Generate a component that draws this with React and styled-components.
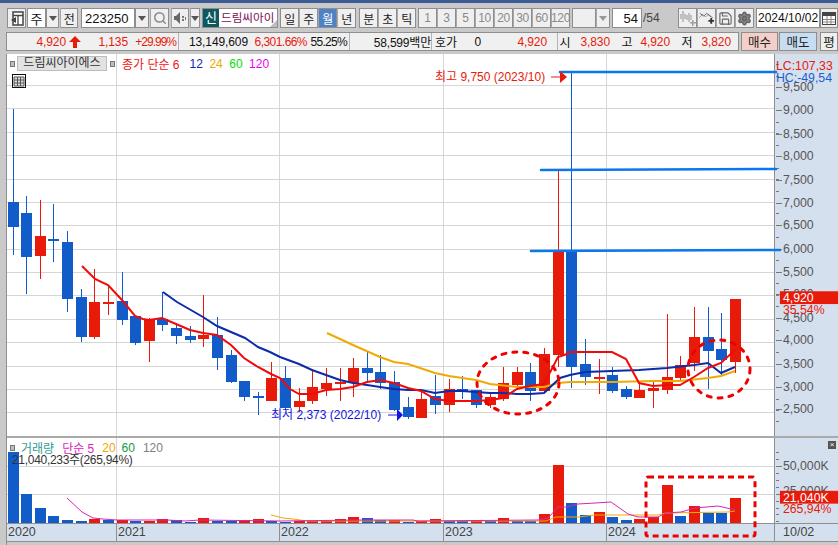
import styled, { createGlobalStyle } from "styled-components";
import { Search, Save, Settings } from "lucide-react";

const GlobalStyle = createGlobalStyle`
  html, body { margin: 0; padding: 0; }
  body { background: #c9c9c9; font-family: "Liberation Sans", "Noto Sans CJK KR", sans-serif; }
`;

const RED = "#e81a0a";
const BLUE = "#125cc9";

// [색, 꼬리위, 몸통위, 몸통아래, 꼬리아래]
const candles = [
  ["b", 109, 202, 227, 255], ["b", 196, 213, 257, 294], ["r", 200, 236, 256, 279], ["b", 204, 239, 241, 262],
  ["b", 231, 242, 299, 312], ["b", 289, 297, 337, 342], ["r", 269, 302, 337, 339], ["r", 285, 302, 304, 315],
  ["b", 272, 301, 320, 325], ["b", 316, 316, 343, 345], ["r", 318, 320, 341, 362], ["b", 292, 319, 325, 331],
  ["b", 324, 328, 336, 344], ["b", 326, 336, 340, 343], ["r", 295, 335, 339, 347], ["b", 317, 335, 358, 370],
  ["b", 350, 355, 382, 383], ["b", 381, 381, 397, 401], ["b", 392, 396, 398, 415], ["r", 362, 378, 401, 401],
  ["b", 366, 378, 408, 410], ["r", 388, 401, 407, 412], ["r", 369, 387, 401, 404], ["r", 368, 383, 389, 396],
  ["r", 368, 382, 384, 401], ["r", 358, 368, 383, 397], ["b", 351, 368, 373, 383], ["b", 355, 372, 383, 389],
  ["b", 371, 382, 410, 411], ["b", 397, 407, 417, 419], ["r", 392, 399, 418, 418], ["b", 375, 396, 405, 414],
  ["r", 379, 389, 405, 412], ["b", 376, 389, 391, 399], ["b", 390, 390, 405, 408], ["r", 394, 397, 405, 408],
  ["r", 367, 383, 399, 401], ["r", 367, 372, 385, 390], ["b", 363, 372, 391, 401], ["r", 348, 354, 391, 392],
  ["r", 171, 252, 355, 367], ["b", 72, 250, 367, 388], ["b", 339, 364, 377, 385], ["r", 359, 377, 379, 394],
  ["b", 367, 375, 391, 393], ["b", 386, 389, 397, 399], ["r", 382, 390, 398, 398], ["r", 381, 388, 391, 408],
  ["r", 314, 377, 390, 394], ["r", 356, 365, 378, 381], ["r", 307, 337, 363, 371], ["b", 307, 337, 351, 389],
  ["b", 313, 349, 360, 376], ["r", 299, 299, 362, 373],
];

const volumes = [
  ["b", 452], ["b", 494], ["b", 508], ["b", 516], ["b", 520], ["b", 521], ["r", 519], ["b", 520],
  ["r", 520], ["b", 521], ["r", 521], ["r", 519], ["b", 520], ["b", 522], ["r", 518], ["b", 521],
  ["b", 521], ["r", 520], ["r", 519], ["b", 521], ["b", 522], ["r", 521], ["r", 521], ["r", 521],
  ["r", 519], ["r", 517], ["b", 518], ["b", 520], ["r", 520], ["b", 522], ["r", 521], ["r", 519],
  ["b", 521], ["b", 521], ["r", 520], ["b", 521], ["r", 518], ["b", 521], ["b", 521], ["r", 514],
  ["r", 465], ["b", 503], ["b", 515], ["r", 512], ["b", 517], ["b", 520], ["r", 519], ["r", 517],
  ["r", 485], ["b", 516], ["r", 506], ["b", 513], ["b", 513], ["r", 498],
];

const candleXs = [
  13, 26, 40, 53, 67, 81, 94, 108, 122, 135, 149, 162, 176, 190, 203, 217, 231, 244, 258, 271, 285, 299, 312, 326, 340, 353, 367,
  380, 394, 408, 421, 435, 449, 462, 476, 490, 503, 517, 530, 544, 558, 571, 585, 599, 612, 626, 639, 653, 667, 680, 694, 708, 721, 735,
];

const ma6 = "82,266 95,279 108,285 122,300 135,316 143,319 149,320 162,318 176,324 190,330 203,333 217,335 231,345 244,358 258,367 271,374 280,378 290,389 299,394 312,394 326,390 340,389 353,387 367,382 380,380 394,383 408,388 421,391 435,399 449,401 462,401 476,401 490,400 503,398 517,389 530,386 544,384 558,357 567,354 570,352 585,352 612,352 626,359 639,383 653,386 667,385 680,385 694,377 708,368 721,363 735,350";
const ma12 = "163,292 177,302 203,317 217,326 245,338 258,347 270,352 280,357 299,364 312,370 326,375 340,380 353,383 367,385 380,387 394,389 408,390 421,390 435,393 449,391 462,391 476,392 490,393 503,393 517,394 530,394 544,393 560,378 570,375 585,372 612,371 639,370 667,368 694,365 708,363 721,373 735,367";
const ma24 = "327,333 353,345 380,357 394,362 408,364 435,373 449,376 476,380 490,384 517,387 544,387 558,383 570,382 612,382 653,381 680,381 708,378 721,376 735,371";
const volMa5 = "67,498 82,512 93,518 103,519 117,520 167,520 185,521 200,520 280,521 362,520 413,520 418,521 538,520 548,518 558,507 566,507 578,504 595,503 611,502 621,509 628,514 638,517 658,517 666,513 681,512 695,508 718,506 735,510";
const volMa20 = "271,515 283,518 293,519 307,521 418,521 546,521 556,517 578,517 595,515 645,515 658,515 666,513 728,512 735,511";

const priceLabels = [
  ["9,500", 85], ["9,000", 108], ["8,500", 132], ["8,000", 155], ["7,500", 179], ["7,000", 202], ["6,500", 225],
  ["6,000", 249], ["5,500", 272], ["5,000", 295], ["4,500", 319], ["4,000", 342], ["3,500", 366], ["3,000", 389], ["2,500", 412],
];
const gridYs = [85, 108, 132, 155, 179, 202, 225, 249, 272, 295, 319, 342, 366, 389, 412];
const gridXs = [116, 279, 443, 606];

const Page = styled.div`
  width: 838px;
  height: 545px;
  overflow: hidden;
  display: flex;
  flex-direction: column;
  background: #c9c9c9;
  color: #222;
  font-size: 12px;
  font-family: "Liberation Sans", "Noto Sans CJK KR", sans-serif;
`;
const TopBand = styled.div`
  height: 3px;
  background: #3d5b94;
  flex: none;
`;
const Toolbar = styled.div`
  height: 20px;
  margin-top: 5px;
  padding-left: 7px;
  display: flex;
  flex: none;
`;
const Group = styled.div`
  display: flex;
  margin-left: ${(p) => p.$gap || 0}px;
`;
const ToolBtn = styled.div`
  width: ${(p) => p.$w || 19}px;
  height: 20px;
  box-sizing: border-box;
  flex: none;
  display: flex;
  align-items: center;
  justify-content: center;
  border: 1px solid #8e8e8e;
  background: ${(p) => (p.$active ? "#4f82c4" : "#efefef")};
  color: ${(p) => (p.$active ? "#fff" : p.$dim ? "#8a8a8a" : "#222")};
  margin-left: ${(p) => p.$gap || 0}px;
  font-size: 12px;
  letter-spacing: -0.4px;
  & + & { border-left-color: #a8a8a8; }
`;
const Field = styled.div`
  width: ${(p) => p.$w}px;
  height: 20px;
  box-sizing: border-box;
  flex: none;
  display: flex;
  align-items: center;
  justify-content: ${(p) => p.$align || "flex-start"};
  padding: 0 ${(p) => p.$pad ?? 3}px;
  border: 1px solid #8e8e8e;
  background: #fff;
  color: #111;
  font-size: ${(p) => p.$size || 13}px;
  margin-left: ${(p) => p.$gap || 0}px;
`;
const Arrow = styled.div`
  width: 0;
  height: 0;
  border-left: 4px solid transparent;
  border-right: 4px solid transparent;
  border-top: 5px solid ${(p) => (p.$dim ? "#999" : "#555")};
`;
const NameBox = styled.div`
  width: 80px;
  height: 20px;
  box-sizing: border-box;
  margin-left: 2px;
  display: flex;
  border: 1px solid #8e8e8e;
  background: #fff;
  position: relative;
  overflow: hidden;
`;
const NameTag = styled.span`
  width: 16px;
  background: #0c5a5f;
  color: #fff;
  text-align: center;
  line-height: 18px;
  font-size: 13px;
  flex: none;
`;
const NameText = styled.span`
  padding-left: 2px;
  color: #7a0b55;
  font-size: 11.6px;
  line-height: 18px;
  white-space: nowrap;
`;
const Corner = styled.i`
  position: absolute;
  right: 0;
  bottom: 0;
  border-left: 7px solid transparent;
  border-bottom: 7px solid #bdbdbd;
`;
const PageCount = styled.span`
  width: 20px;
  margin-left: 1px;
  line-height: 20px;
  color: #444;
  flex: none;
`;

const InfoRow = styled.div`
  height: 19px;
  margin-top: 4px;
  padding-left: 6px;
  display: flex;
  flex: none;
`;
const InfoBar = styled.div`
  width: 733px;
  box-sizing: border-box;
  display: flex;
  border: 1px solid #8e8e8e;
  background: #f0f0f0;
  flex: none;
`;
const InfoCell = styled.div`
  width: ${(p) => p.$w}px;
  box-sizing: border-box;
  display: flex;
  align-items: center;
  border-right: ${(p) => (p.$last ? "none" : "1px solid #b4b4b4")};
  flex: none;
`;
const Num = styled.span`
  color: ${(p) => p.$color || "#111"};
  width: ${(p) => (p.$w ? `${p.$w}px` : "auto")};
  margin-left: ${(p) => p.$gap || 0}px;
  text-align: ${(p) => p.$align || "right"};
  letter-spacing: ${(p) => p.$track ?? -0.1}px;
  white-space: nowrap;
  flex: none;
`;
const UpArrow = styled.svg`
  margin-left: 3px;
  flex: none;
`;
const TradeBtn = styled.div`
  width: ${(p) => p.$w}px;
  box-sizing: border-box;
  margin-left: ${(p) => p.$gap}px;
  display: flex;
  align-items: center;
  justify-content: center;
  border: 1px solid #8e8e8e;
  background: ${(p) => p.$bg};
  font-size: 12.5px;
  color: #222;
  flex: none;
`;

const Board = styled.div`
  margin-top: 3px;
  margin-left: 6px;
  flex: 1;
  display: flex;
  flex-direction: column;
  border-left: 1px solid #8f8f8f;
`;
const PricePanel = styled.div`
  height: 382px;
  display: flex;
  position: relative;
  flex: none;
  background: #fff;
`;
const VolumePanel = styled.div`
  height: 85px;
  display: flex;
  position: relative;
  flex: none;
  background: #fff;
  border-top: 2px solid #a9a9a9;
`;
const Plot = styled.svg`
  width: 767px;
  height: 100%;
  display: block;
  overflow: visible;
  position: relative;
  z-index: 2;
  flex: none;
`;
const Axis = styled.svg`
  width: 64px;
  height: 100%;
  display: block;
  background: #d5e0ee;
  border-left: 1px solid #8f8f8f;
  box-sizing: border-box;
  flex: none;
`;
const AxisLabel = styled.text`
  font-family: "Liberation Sans", sans-serif;
  font-size: 12.5px;
  fill: ${(p) => p.$color || "#555"};
`;
const ChartNote = styled.text`
  font-family: "Liberation Sans", "Noto Sans CJK KR", sans-serif;
  font-size: 12px;
  fill: ${(p) => p.$color};
`;
const LegendRow = styled.div`
  position: absolute;
  top: 2px;
  left: 3px;
  height: 15px;
  display: flex;
  align-items: center;
  z-index: 3;
`;
const VolumeLegend = styled.div`
  position: absolute;
  top: 2px;
  left: 3px;
  z-index: 3;
`;
const Bullet = styled.i`
  width: 5px;
  height: 6px;
  background: #bdbdbd;
  border: 1px solid #777;
  box-sizing: border-box;
  flex: none;
`;
const StockChip = styled.span`
  width: 90px;
  height: 15px;
  margin: 0 3px 0 2px;
  box-sizing: border-box;
  background: #e2e2e2;
  border: 1px solid #bdbdbd;
  text-align: center;
  line-height: 13px;
  font-size: 12px;
  color: #333;
`;
const LegendItem = styled.span`
  color: ${(p) => p.$color};
  margin-left: ${(p) => p.$gap}px;
  font-size: 12px;
  white-space: nowrap;
`;
const GridIcon = styled.svg`
  position: absolute;
  top: 20px;
  left: 5px;
  z-index: 3;
`;
const VolumeHead = styled.div`
  display: flex;
  align-items: center;
  height: 15px;
`;
const VolumeInfo = styled.div`
  margin-left: 2px;
  margin-top: -1px;
  line-height: 12px;
  font-size: 12px;
  color: #333;
  letter-spacing: -0.3px;
`;
const CloseChip = styled.span`
  position: absolute;
  top: 3px;
  right: 2px;
  width: 8px;
  height: 8px;
  background: #555;
  color: #fff;
  font-size: 8px;
  line-height: 8px;
  text-align: center;
  z-index: 3;
`;
const TimeAxis = styled.div`
  height: 19px;
  flex: none;
  display: flex;
  background: #d5e0ee;
  border-top: 1px solid #8f8f8f;
  border-bottom: 1px solid #8f8f8f;
  box-sizing: border-box;
`;
const TimeCell = styled.div`
  width: ${(p) => p.$w}px;
  box-sizing: border-box;
  padding-left: ${(p) => p.$pad || 1}px;
  border-right: ${(p) => (p.$last ? "none" : "1px solid #8f8f8f")};
  color: #444;
  font-size: 12.5px;
  line-height: 17px;
  flex: none;
`;

function ChartLayoutIcon() {
  return (
    <svg width="14" height="15" viewBox="0 0 14 15">
      <rect x="3" y="1" width="10" height="13" fill="#fff" stroke="#444" strokeWidth="1.5" />
      <path d="M3 4.5h10M8 4.5v9.5" stroke="#444" strokeWidth="1.3" />
      <path d="M6 6v6L1 9z" fill="#444" />
    </svg>
  );
}

function SpeakerIcon() {
  return (
    <svg width="14" height="14" viewBox="0 0 14 14">
      <path d="M1 5h2l4-4v12l-4-4H1z" fill="#666" />
      <path d="M9 5h2v2H9zM9 8h2v2H9zM12 6h1v3h-1z" fill="#777" />
    </svg>
  );
}

function CandleIcon() {
  return (
    <svg width="17" height="16" viewBox="0 0 17 16">
      <path d="M3 1h2v3h2v5H5v3H3V9H1V4h2zM9 3h2v2h2v5h-2v2H9v-2H7V5h2z" fill="#c0c0c0" />
      <path d="M13 10h1.5v2H17v1.5h-2.500V16H13v-2.500h-2V12h2z" fill="#a0a0a0" />
    </svg>
  );
}

function LineAddIcon() {
  return (
    <svg width="18" height="16" viewBox="0 0 18 16">
      <path d="M1 8l4-4 3 3 3-3 5 4" fill="none" stroke="#9a9a9a" />
      <path d="M2 3l4 3 3-3 5 4" fill="none" stroke="#666" />
      <path d="M11 10h2V8h2v2h2v2h-2v2h-2v-2h-2z" fill="#333" />
    </svg>
  );
}

function CalendarIcon() {
  return (
    <svg width="14" height="13" viewBox="0 0 14 13">
      <rect x="0.5" y="0.5" width="13" height="12" fill="#fff" stroke="#444" />
      <path d="M1 1h12v3H1z" fill="#444" />
      <path d="M1 7.500h12M1 10h12M5 4v8M9 4v8" stroke="#888" />
    </svg>
  );
}

function Candles() {
  return candles.map(([c, wt, bt, bb, wb], i) => {
    const x = candleXs[i] + 0.5;
    const color = c === "r" ? RED : BLUE;
    return (
      <g key={i} shapeRendering="crispEdges">
        <line x1={x} x2={x} y1={wt} y2={wb} stroke={color} />
        <rect x={x - 5.5} y={bt} width={11} height={bb - bt} fill={color} />
      </g>
    );
  });
}

function GridLines({ ys, top, bottom }) {
  return (
    <g stroke="#d6d6d6" shapeRendering="crispEdges">
      {ys.map((y) => <line key={y} x1="7" x2="774" y1={y + 0.5} y2={y + 0.5} />)}
      {gridXs.map((x) => <line key={x} x1={x + 0.5} x2={x + 0.5} y1={top} y2={bottom} />)}
    </g>
  );
}

function PriceAxis() {
  const minor = [];
  for (let y = 61; y < 436; y += 23.45 / 2) minor.push(Math.round(y));
  return (
    <Axis viewBox="774 54 64 382">
      <g stroke="#777" shapeRendering="crispEdges">
        {minor.map((y) => <line key={y} x1="775" x2="778" y1={y + 0.5} y2={y + 0.5} />)}
        {priceLabels.map(([, y]) => <line key={y} x1="775" x2="781" y1={y + 0.5} y2={y + 0.5} />)}
      </g>
      {priceLabels.map(([t, y]) => <AxisLabel key={t} x="782" y={y + 4}>{t}</AxisLabel>)}
      <AxisLabel x="775" y="67" $color="#e81a0a">LC:107,33</AxisLabel>
      <AxisLabel x="775" y="79" $color="#1a5fd0">HC:-49,54</AxisLabel>
      <rect x="779" y="292" width="59" height="13" fill={RED} />
      <AxisLabel x="782" y="303" $color="#fff">4,920</AxisLabel>
      <AxisLabel x="782" y="315" $color="#e81a0a">35,54%</AxisLabel>
    </Axis>
  );
}

function VolumeAxis() {
  const minor = [452, 459, 473, 480, 487, 501, 508, 515, 522];
  return (
    <Axis viewBox="774 438 64 85">
      <g stroke="#777" shapeRendering="crispEdges">
        {minor.map((y) => <line key={y} x1="775" x2="778" y1={y + 0.5} y2={y + 0.5} />)}
        <line x1="775" x2="781" y1="466.5" y2="466.5" />
        <line x1="775" x2="781" y1="494.5" y2="494.5" />
      </g>
      <AxisLabel x="782" y="470">50,000K</AxisLabel>
      <AxisLabel x="782" y="495">25,000K</AxisLabel>
      <rect x="779" y="491" width="59" height="13" fill={RED} />
      <AxisLabel x="782" y="502" $color="#fff">21,040K</AxisLabel>
      <AxisLabel x="782" y="514" $color="#e81a0a">265,94%</AxisLabel>
    </Axis>
  );
}

export default function App() {
  return (
    <Page>
      <GlobalStyle />
      <TopBand />
      <Toolbar>
        <ToolBtn><ChartLayoutIcon /></ToolBtn>
        <Field $w={19} $gap={1} $pad={0} $align="center">주</Field>
        <ToolBtn $w={13}><Arrow /></ToolBtn>
        <ToolBtn $w={18} $gap={1}>전</ToolBtn>
        <Field $w={54} $gap={3}>223250</Field>
        <ToolBtn $w={14}><Arrow /></ToolBtn>
        <ToolBtn $w={19} $gap={1}><Search size={14} color="#888" strokeWidth={2.5} /></ToolBtn>
        <ToolBtn $w={18} $gap={2}><SpeakerIcon /></ToolBtn>
        <ToolBtn $w={10} $gap={1}><Arrow /></ToolBtn>
        <NameBox>
          <NameTag>신</NameTag>
          <NameText>드림씨아이</NameText>
          <Corner />
        </NameBox>
        <Group $gap={2}>
          <ToolBtn>일</ToolBtn>
          <ToolBtn>주</ToolBtn>
          <ToolBtn $active>월</ToolBtn>
          <ToolBtn>년</ToolBtn>
        </Group>
        <Group $gap={3}>
          <ToolBtn>분</ToolBtn>
          <ToolBtn>초</ToolBtn>
          <ToolBtn>틱</ToolBtn>
        </Group>
        <Group $gap={2}>
          {["1", "3", "5", "10", "20", "30", "60", "120"].map((t) => (
            <ToolBtn key={t} $dim>{t}</ToolBtn>
          ))}
        </Group>
        <ToolBtn $w={24} $gap={2} />
        <ToolBtn $w={14}><Arrow $dim /></ToolBtn>
        <Field $w={30} $gap={2} $align="flex-end">54</Field>
        <PageCount>/54</PageCount>
        <ToolBtn $w={19} $gap={15}><CandleIcon /></ToolBtn>
        <ToolBtn $w={19}><LineAddIcon /></ToolBtn>
        <ToolBtn $w={19}><Save size={15} color="#666" strokeWidth={1.8} /></ToolBtn>
        <ToolBtn $w={19}><Settings size={15} color="#666" fill="#888" strokeWidth={2.5} /></ToolBtn>
        <Field $w={64} $gap={2} $pad={1} $size={12}>2024/10/02</Field>
        <ToolBtn $w={18}><CalendarIcon /></ToolBtn>
      </Toolbar>

      <InfoRow>
        <InfoBar>
          <InfoCell $w={172}>
            <Num $color={RED} $w={59}>4,920</Num>
            <UpArrow width="12" height="12" viewBox="0 0 12 12"><path d="M6 0l6 6H8v6H4V6H0z" fill={RED} /></UpArrow>
            <Num $color={RED} $w={47}>1,135</Num>
            <Num $color={RED} $w={48} $track={-1}>+29.99%</Num>
          </InfoCell>
          <InfoCell $w={171}>
            <Num $w={69}>13,149,609</Num>
            <Num $color={RED} $w={59} $track={-0.55}>6,301.66%</Num>
            <Num $w={40} $track={-0.7}>55.25%</Num>
          </InfoCell>
          <InfoCell $w={82}>
            <Num $w={81} $track={-0.2}>58,599백만</Num>
          </InfoCell>
          <InfoCell $w={126}>
            <Num $w={28} $align="center">호가</Num>
            <Num $w={21}>0</Num>
            <Num $color={RED} $w={66}>4,920</Num>
          </InfoCell>
          <InfoCell $w={180} $last>
            <Num $w={14} $align="center">시</Num>
            <Num $color={RED} $w={38}>3,830</Num>
            <Num $w={14} $gap={10} $align="center">고</Num>
            <Num $color={RED} $w={36}>4,920</Num>
            <Num $w={14} $gap={10} $align="center">저</Num>
            <Num $color={RED} $w={37}>3,820</Num>
          </InfoCell>
        </InfoBar>
        <TradeBtn $w={37} $gap={2} $bg="#f4cfc9">매수</TradeBtn>
        <TradeBtn $w={38} $gap={1} $bg="#c7ddf2">매도</TradeBtn>
        <TradeBtn $w={18} $gap={3} $bg="#efefef">평</TradeBtn>
      </InfoRow>

      <Board>
        <PricePanel>
          <LegendRow>
            <Bullet />
            <StockChip>드림씨아이에스</StockChip>
            <Bullet />
            <LegendItem $color="#ee1111" $gap={7}>종가 단순 6</LegendItem>
            <LegendItem $color="#0c2ca8" $gap={10}>12</LegendItem>
            <LegendItem $color="#eea800" $gap={6.5}>24</LegendItem>
            <LegendItem $color="#00e000" $gap={6.5}>60</LegendItem>
            <LegendItem $color="#f000f0" $gap={6.5}>120</LegendItem>
          </LegendRow>
          <GridIcon width="14" height="14" viewBox="0 0 14 14">
            <rect x="0.5" y="0.5" width="13" height="13" fill="#fff" stroke="#111" />
            <path d="M2 3h10v9H2z" fill="#ddd" stroke="#555" />
            <path d="M2 6h10M2 9h10M5.500 3v9M8.500 3v9" stroke="#555" />
          </GridIcon>
          <Plot viewBox="7 54 767 382">
            <GridLines ys={gridYs} top="54" bottom="436" />
            <Candles />
            <polyline points={ma24} fill="none" stroke="#f0aa00" strokeWidth="2" />
            <polyline points={ma12} fill="none" stroke="#0c2ca8" strokeWidth="2" />
            <polyline points={ma6} fill="none" stroke="#f00a0a" strokeWidth="2" />
            <g stroke="#0a78ec" strokeWidth="2.6" strokeLinecap="round">
              <line x1="560" x2="776" y1="72" y2="72" />
              <line x1="541" x2="776" y1="170" y2="169" />
              <line x1="531" x2="780" y1="251" y2="250" />
            </g>
            <g fill="none" stroke="#ee0000" strokeWidth="3" strokeLinecap="round" strokeDasharray="4 7">
              <ellipse cx="518" cy="383" rx="41" ry="31" />
              <ellipse cx="719" cy="369" rx="31" ry="29" />
            </g>
            <ChartNote x="435" y="81" $color="#e81a0a">최고 9,750 (2023/10)</ChartNote>
            <path d="M551 77h9" stroke="#e81a0a" />
            <path d="M560 71l7 6-7 6z" fill="#e81a0a" />
            <ChartNote x="271" y="419" $color="#1414e0">최저 2,373 (2022/10)</ChartNote>
            <path d="M388 415h9" stroke="#1414e0" />
            <path d="M397 409l6 6-6 6z" fill="#1414e0" />
          </Plot>
          <PriceAxis />
        </PricePanel>

        <VolumePanel>
          <VolumeLegend>
            <VolumeHead>
              <Bullet />
              <LegendItem $color="#2f9a96" $gap={6}>거래량</LegendItem>
              <LegendItem $color="#e020c0" $gap={8}>단순 5</LegendItem>
              <LegendItem $color="#eea800" $gap={8}>20</LegendItem>
              <LegendItem $color="#109a40" $gap={6}>60</LegendItem>
              <LegendItem $color="#808080" $gap={8}>120</LegendItem>
            </VolumeHead>
            <VolumeInfo>21,040,233주(265,94%)</VolumeInfo>
          </VolumeLegend>
          <CloseChip>×</CloseChip>
          <Plot viewBox="7 438 767 85">
            <GridLines ys={[466, 494]} top="438" bottom="523" />
            <g shapeRendering="crispEdges">
              {volumes.map(([c, top], i) => (
                <rect key={i} x={candleXs[i] - 5} y={top} width={11} height={523 - top} fill={c === "r" ? RED : BLUE} />
              ))}
            </g>
            <polyline points={volMa20} fill="none" stroke="#f0aa00" />
            <polyline points={volMa5} fill="none" stroke="#d824b8" />
            <rect x="646" y="477" width="109" height="59" rx="2" fill="none" stroke="#ee0000" strokeWidth="3" strokeDasharray="6 4" />
          </Plot>
          <VolumeAxis />
        </VolumePanel>

        <TimeAxis>
          <TimeCell $w={110}>2020</TimeCell>
          <TimeCell $w={163}>2021</TimeCell>
          <TimeCell $w={164}>2022</TimeCell>
          <TimeCell $w={163}>2023</TimeCell>
          <TimeCell $w={168}>2024</TimeCell>
          <TimeCell $w={63} $pad={8} $last>10/02</TimeCell>
        </TimeAxis>
      </Board>
    </Page>
  );
}
